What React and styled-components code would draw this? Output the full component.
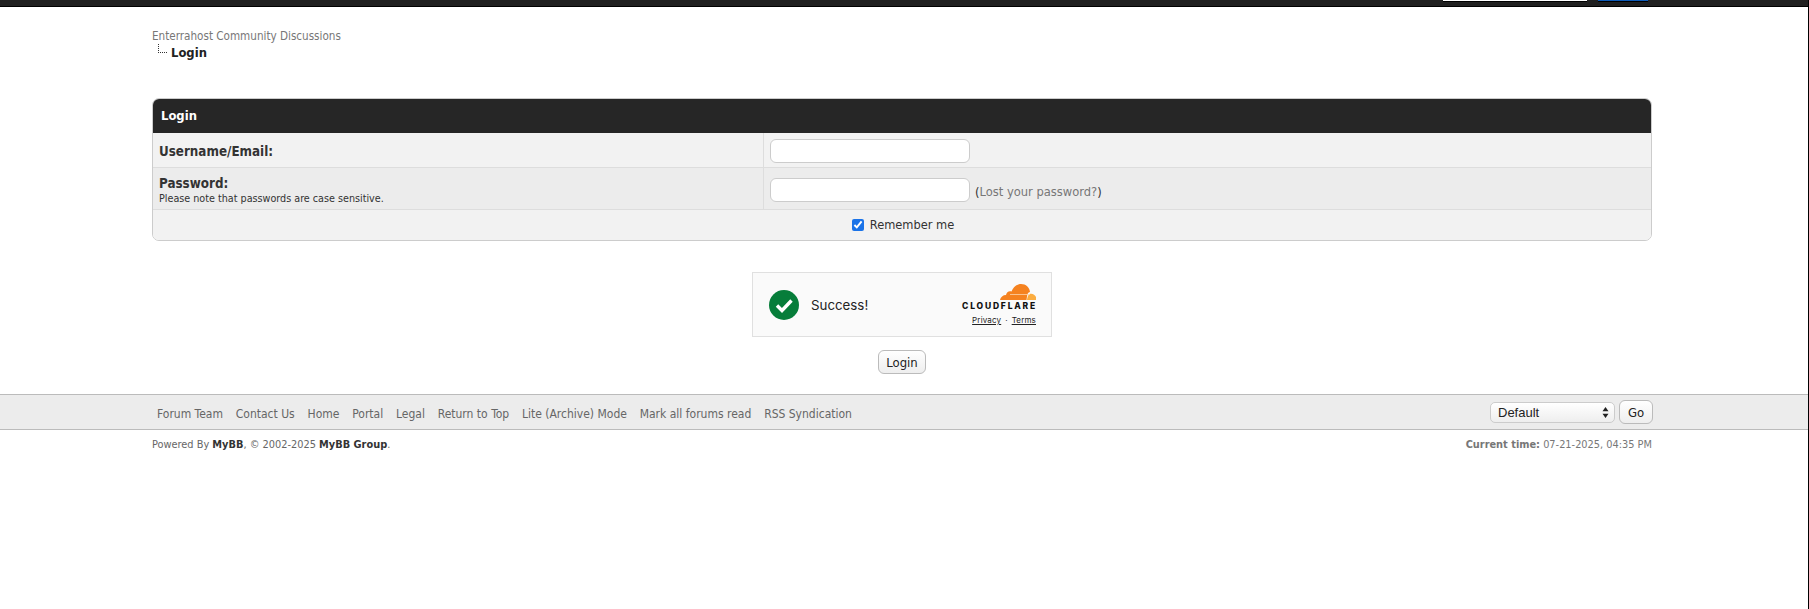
import React from "react";
import styled, { createGlobalStyle } from "styled-components";

const GlobalStyle = createGlobalStyle`
  html, body {
    margin: 0;
    padding: 0;
    background: #fff;
    color: #333;
    font-family: "DejaVu Sans Condensed", "DejaVu Sans", sans-serif;
    font-size: 13px;
    line-height: 1.4;
  }
`;

const Page = styled.div`
  height: 609px;
  overflow: hidden;
  border-right: 1px solid #000;
`;

const TopBar = styled.div`
  height: 6px;
  background: #202020;
  border-bottom: 1px solid #000;
  display: flex;
  justify-content: flex-end;
  align-items: flex-start;
  padding-right: 160px;
  gap: 11px;
`;

const TopInput = styled.div`
  width: 144px;
  height: 1px;
  background: #fff;
  border-bottom: 1px solid #000;
`;

const TopButton = styled.div`
  width: 50px;
  height: 1px;
  background: #0f5cb8;
  border-bottom: 1px solid #000;
`;

const Wrapper = styled.div`
  width: 1500px;
  margin-left: 152px;
`;

const Navigation = styled.div`
  padding-top: 20px;
  height: 71px;
  box-sizing: border-box;
`;

const NavLink = styled.a`
  display: block;
  height: 18px;
  line-height: 18px;
  font-size: 11.6px;
  color: #777;
`;

const ActiveRow = styled.div`
  display: flex;
  align-items: flex-start;
  height: 16px;
`;

const ActiveText = styled.span`
  font-size: 12.9px;
  line-height: 16px;
  font-weight: bold;
  color: #222;
  margin-left: 19px;
  position: relative;

  &::before {
    content: "";
    position: absolute;
    left: -13px;
    top: -1px;
    width: 8px;
    height: 8px;
    border-left: 1px dotted #333;
    border-bottom: 1px dotted #333;
  }
`;

const FormTable = styled.table`
  width: 100%;
  border: 1px solid #ccc;
  border-radius: 7px;
  border-spacing: 0;
  border-collapse: separate;
  overflow: hidden;
  margin-top: 20px;
  background: #fff;
  table-layout: fixed;
`;

const LabelColumn = styled.col`
  width: 611px;
`;

const HeadCell = styled.th`
  background: #262626;
  color: #fff;
  font-size: 12.9px;
  font-weight: bold;
  text-align: left;
  height: 34px;
  padding: 1px 8px 0;
  box-sizing: border-box;
`;

const Cell = styled.td`
  background: ${(p) => (p.$alt ? "#ececec" : "#f2f2f2")};
  border-bottom: ${(p) => (p.$last ? "0" : "1px solid #ddd")};
  border-right: ${(p) => (p.$split ? "1px solid #ddd" : "0")};
  padding: 2px 6px 0;
  height: ${(p) => p.$h}px;
  text-align: ${(p) => (p.$center ? "center" : "left")};
  vertical-align: middle;
  box-sizing: border-box;
`;

const FieldLabel = styled.strong`
  display: block;
  margin-top: 2px;
  font-size: 13.3px;
  line-height: 16px;
  color: #333;
`;

const Smalltext = styled.div`
  font-size: 10.7px;
  line-height: 14px;
  color: #333;
`;

const TextBox = styled.input`
  width: 200px;
  height: 24px;
  box-sizing: border-box;
  background: #fff;
  border: 1px solid #ccc;
  border-radius: 6px;
  padding: 0;
  vertical-align: middle;
  outline: none;
`;

const LostNote = styled.span`
  display: inline-block;
  margin-left: 5px;
  padding-top: 4px;
  font-size: 12.8px;
  color: #333;
  vertical-align: middle;

  a {
    color: #777;
  }
`;

const RememberLabel = styled.label`
  display: inline-flex;
  align-items: center;
  gap: 6px;
  padding-left: 2px;
  font-size: 12.7px;
  color: #333;
`;

const CheckBox = styled.input`
  width: 12px;
  height: 12px;
  margin: 0;
  accent-color: #1a73e8;
`;

const CaptchaRow = styled.div`
  display: flex;
  justify-content: center;
  margin-top: 31px;
`;

const Turnstile = styled.div`
  width: 300px;
  height: 65px;
  box-sizing: border-box;
  background: #fafafa;
  border: 1px solid #e0e0e0;
  display: flex;
  align-items: center;
  padding: 0 15px;
`;

const SuccessText = styled.span`
  font-family: Inter, "Liberation Sans", sans-serif;
  font-size: 13.3px;
  color: #232323;
  margin-left: 11px;
  padding-top: 2px;
  flex: 1;
`;

const Brand = styled.div`
  display: flex;
  flex-direction: column;
  align-items: flex-end;
  font-family: Inter, "Liberation Sans", sans-serif;
`;

const BrandName = styled.span`
  font-size: 8.5px;
  line-height: 9px;
  font-weight: 800;
  letter-spacing: 1.8px;
  margin-right: -1px;
  color: #111;
  margin-top: 1px;
`;

const BrandLinks = styled.div`
  display: flex;
  gap: 4px;
  font-size: 8px;
  line-height: 10px;
  letter-spacing: 0.15px;
  color: #232323;
  margin-top: 4px;

  a {
    color: inherit;
    text-decoration: underline;
  }
`;

const SubmitRow = styled.div`
  display: flex;
  justify-content: center;
  margin-top: 13px;
`;

const Button = styled.button`
  height: 24px;
  min-width: ${(p) => p.$minWidth || 0}px;
  box-sizing: border-box;
  padding: 0 7px;
  border: 1px solid #bbb;
  border-radius: 6px;
  background: linear-gradient(#fff, #eee);
  color: #222;
  font-family: "DejaVu Sans Condensed", "DejaVu Sans", sans-serif;
  font-size: 13px;
`;

const FooterBar = styled.div`
  margin-top: 20px;
  height: 36px;
  box-sizing: border-box;
  background: #ececec;
  border-top: 1px solid #bbb;
  border-bottom: 1px solid #bbb;
`;

const FooterInner = styled(Wrapper)`
  height: 100%;
  display: flex;
  align-items: center;
  justify-content: space-between;
`;

const FooterLinks = styled.ul`
  list-style: none;
  display: flex;
  gap: 12.8px;
  margin: 0;
  padding: 4px 0 0 5px;

  a {
    color: #666;
    font-size: 12px;
  }
`;

const ThemeForm = styled.div`
  display: flex;
  align-items: center;
  gap: 4px;
  margin-right: -1px;
`;

const SelectWrap = styled.div`
  position: relative;
  height: 21px;

  svg {
    position: absolute;
    right: 6px;
    top: 5px;
    pointer-events: none;
  }
`;

const ThemeSelect = styled.select`
  appearance: none;
  width: 125px;
  height: 21px;
  box-sizing: border-box;
  font-family: "Liberation Sans", sans-serif;
  font-size: 13px;
  padding: 0 0 0 7px;
  border: 1px solid #ccc;
  border-radius: 5px;
  background: linear-gradient(#fff, #eee);
  color: #222;
`;

const Copyright = styled(Wrapper)`
  display: flex;
  justify-content: space-between;
  padding-top: 7px;
  font-size: 10.9px;
  color: #666;

  strong {
    color: #333;
  }
`;

const CurrentTime = styled.span`
  color: #777;

  strong {
    color: #777;
  }
`;

const CheckIcon = () => (
  <svg width="32" height="32" viewBox="0 0 32 32">
    <circle cx="16" cy="16" r="15" fill="#067d3a" />
    <path d="M9 16.500l5 5 9.500-10" fill="none" stroke="#fff" strokeWidth="3.400" />
  </svg>
);

const CloudIcon = () => (
  <svg width="36" height="17" viewBox="0 0 36 17">
    <path
      d="M0 16c.5-3 3-5 6-5 .6-3 3-4.500 5.500-3.500C13.500 3 17 0 21 0c5 0 8.500 3.500 9 8-1 .2-1.800.8-2.200 1.500-.8 2-1 4.500-1.300 6.500z"
      fill="#f58220"
    />
    <path
      d="M27 16c.3-2.500 1-5 2.500-6 2.500-1 5.500.5 6.500 3 .2 1 0 2 0 3z"
      fill="#fbad41"
    />
    <path d="M10 10.500h20" stroke="#fbd3ab" strokeWidth="0.8" />
  </svg>
);

const SelectArrows = () => (
  <svg width="7" height="11" viewBox="0 0 7 11">
    <path d="M3.500 0L6.500 4.300H.5zM3.500 11L.5 6.700h6z" fill="#222" />
  </svg>
);

export default function App() {
  const links = [
    "Forum Team",
    "Contact Us",
    "Home",
    "Portal",
    "Legal",
    "Return to Top",
    "Lite (Archive) Mode",
    "Mark all forums read",
    "RSS Syndication",
  ];

  return (
    <Page>
      <GlobalStyle />
      <TopBar>
        <TopInput />
        <TopButton />
      </TopBar>
      <Wrapper>
        <Navigation>
          <NavLink>Enterrahost Community Discussions</NavLink>
          <ActiveRow>
            <ActiveText>Login</ActiveText>
          </ActiveRow>
        </Navigation>
        <FormTable>
          <colgroup>
            <LabelColumn />
            <col />
          </colgroup>
          <thead>
            <tr>
              <HeadCell colSpan={2}>Login</HeadCell>
            </tr>
          </thead>
          <tbody>
            <tr>
              <Cell $h={35} $split>
                <FieldLabel>Username/Email:</FieldLabel>
              </Cell>
              <Cell $h={35}>
                <TextBox type="text" />
              </Cell>
            </tr>
            <tr>
              <Cell $h={42} $alt $split>
                <FieldLabel>Password:</FieldLabel>
                <Smalltext>Please note that passwords are case sensitive.</Smalltext>
              </Cell>
              <Cell $h={42} $alt>
                <TextBox type="password" />
                <LostNote>
                  (<a>Lost your password?</a>)
                </LostNote>
              </Cell>
            </tr>
            <tr>
              <Cell colSpan={2} $h={30} $center $last>
                <RememberLabel>
                  <CheckBox type="checkbox" defaultChecked />
                  Remember me
                </RememberLabel>
              </Cell>
            </tr>
          </tbody>
        </FormTable>
        <CaptchaRow>
          <Turnstile>
            <CheckIcon />
            <SuccessText>Success!</SuccessText>
            <Brand>
              <CloudIcon />
              <BrandName>CLOUDFLARE</BrandName>
              <BrandLinks>
                <a>Privacy</a>
                <span>·</span>
                <a>Terms</a>
              </BrandLinks>
            </Brand>
          </Turnstile>
        </CaptchaRow>
        <SubmitRow>
          <Button>Login</Button>
        </SubmitRow>
      </Wrapper>
      <FooterBar>
        <FooterInner>
          <FooterLinks>
            {links.map((label) => (
              <li key={label}>
                <a>{label}</a>
              </li>
            ))}
          </FooterLinks>
          <ThemeForm>
            <SelectWrap>
              <ThemeSelect defaultValue="Default">
                <option>Default</option>
              </ThemeSelect>
              <SelectArrows />
            </SelectWrap>
            <Button $minWidth={34}>Go</Button>
          </ThemeForm>
        </FooterInner>
      </FooterBar>
      <Copyright>
        <span>
          Powered By <strong>MyBB</strong>, © 2002-2025 <strong>MyBB Group</strong>.
        </span>
        <CurrentTime>
          <strong>Current time:</strong> 07-21-2025, 04:35 PM
        </CurrentTime>
      </Copyright>
    </Page>
  );
}
